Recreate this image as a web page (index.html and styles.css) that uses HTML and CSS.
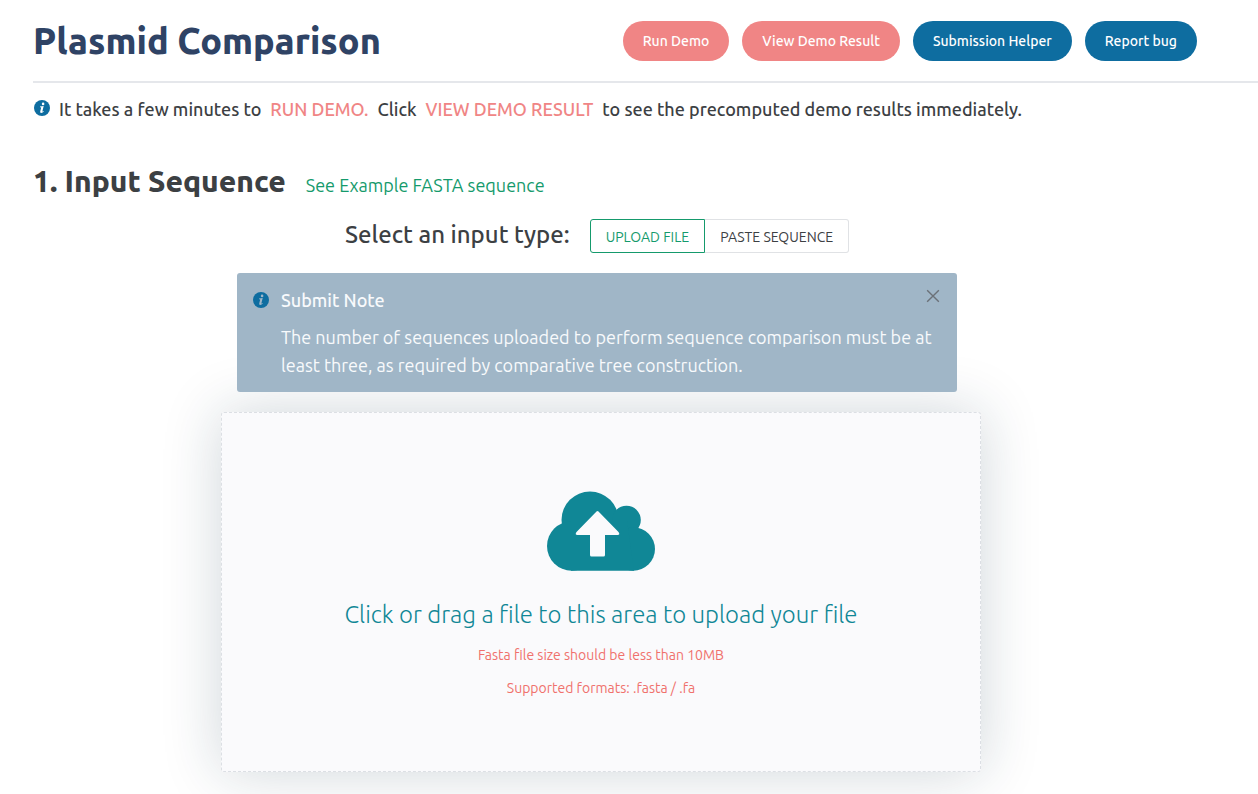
FILE: index.html
```html
<!DOCTYPE html>
<html lang="en">
<head>
<meta charset="utf-8">
<meta name="viewport" content="width=device-width, initial-scale=1">
<title>Plasmid Comparison</title>
<link rel="stylesheet" href="styles.css">
</head>
<body>
<svg class="symbols" aria-hidden="true">
  <symbol id="info" viewBox="0 0 16 16">
    <circle cx="8" cy="8" r="8" fill="#0e6da0"/>
    <circle cx="9.100" cy="3.900" r="1.300" fill="currentColor"/>
    <path d="M6 6.400 9.700 6 8.400 11.200Q8.300 11.900 9.600 10.900L9.900 11.400Q5.900 14.500 6.200 11.500L7.200 7.500Q7.300 7 6 7.200Z" fill="currentColor"/>
  </symbol>
</svg>
<main class="page">
  <header class="page-header">
    <h1 class="title">Plasmid Comparison</h1>
    <div class="actions">
      <button type="button" class="pill pill-demo">Run Demo</button>
      <button type="button" class="pill pill-demo">View Demo Result</button>
      <button type="button" class="pill">Submission Helper</button>
      <button type="button" class="pill">Report bug</button>
    </div>
  </header>
  <div class="hint">
    <svg class="info-icon"><use href="#info"/></svg>
    <p class="hint-text"><span>It takes a few minutes to</span><span class="accent">RUN DEMO.</span><span>Click</span><span class="accent">VIEW DEMO RESULT</span><span>to see the precomputed demo results immediately.</span></p>
  </div>
  <section class="input-section">
    <div class="section-heading">
      <h2 class="section-title">1. Input Sequence</h2>
      <a class="example-link" href="#example">See Example FASTA sequence</a>
    </div>
    <div class="type-row">
      <h3 class="type-label" id="type-label">Select an input type:</h3>
      <div class="segmented" role="group" aria-labelledby="type-label">
        <button type="button" class="segment segment-active" aria-pressed="true">UPLOAD FILE</button>
        <button type="button" class="segment" aria-pressed="false">PASTE SEQUENCE</button>
      </div>
    </div>
    <div class="note" role="note">
      <svg class="info-icon"><use href="#info"/></svg>
      <div class="note-body">
        <h4 class="note-title">Submit Note</h4>
        <p class="note-text">The number of sequences uploaded to perform sequence comparison must be at least three, as required by comparative tree construction.</p>
      </div>
      <button type="button" class="close" aria-label="Close">
        <svg class="close-icon" viewBox="0 0 12 12"><path d="M1 1 11 11M11 1 1 11" fill="none" stroke="currentColor" stroke-width="1.2"/></svg>
      </button>
    </div>
    <div class="drop-row">
      <button type="button" class="dropzone" id="example">
        <svg class="cloud" viewBox="0 0 108 80" aria-hidden="true">
          <g fill="#108796">
            <circle cx="43" cy="29" r="28.500"/>
            <circle cx="79.500" cy="29" r="14.300"/>
            <circle cx="24.700" cy="55" r="24.700"/>
            <circle cx="86.300" cy="58" r="21.700"/>
            <path d="M24 30H80L87 79.700H24Z"/>
          </g>
          <path fill="#fafafc" d="M49.500 20.500Q50.500 19.500 51.500 20.500L71.500 41Q73.500 44 70.500 44H58V64Q58 65.500 56.500 65.500H44.500Q43 65.500 43 64V44H30.500Q27.500 44 29.500 41Z"/>
        </svg>
        <span class="drop-title">Click or drag a file to this area to upload your file</span>
        <span class="drop-hint">Fasta file size should be less than 10MB</span>
        <span class="drop-hint">Supported formats: .fasta / .fa</span>
      </button>
    </div>
  </section>
</main>
</body>
</html>
```
FILE: styles.css
```css
* {
  box-sizing: border-box;
}

body {
  margin: 0;
  background: #fff;
  color: #3c4043;
  font-family: Ubuntu, "Noto Sans", "Open Sans", sans-serif;
  font-size: 18px;
  line-height: 28px;
}

h1, h2, h3, h4, p {
  margin: 0;
}

button {
  font-family: inherit;
  cursor: pointer;
}

.symbols {
  display: none;
}

.page {
  padding-left: 33px;
}

.page-header {
  display: flex;
  align-items: center;
  justify-content: space-between;
  padding: 16px 61px 15px 0;
  border-bottom: 2px solid #e5e7eb;
  line-height: 50px;
}

.title {
  color: #2f4365;
  font-size: 36px;
  font-weight: 800;
}

.actions {
  display: flex;
  gap: 13px;
}

.pill {
  height: 40px;
  padding: 0 20px;
  border: 0;
  border-radius: 20px;
  background: #0e6da0;
  color: #fff;
  font-size: 14px;
  font-weight: 500;
  white-space: nowrap;
}

.pill-demo {
  background: #f08585;
}

.info-icon {
  flex: none;
  width: 16px;
  height: 16px;
  color: #fff;
}

.hint {
  display: flex;
  align-items: flex-start;
  gap: 9px;
  padding: 12px 0 0 1px;
}

.hint .info-icon {
  margin-top: 5px;
}

.hint-text {
  display: flex;
  flex-wrap: wrap;
  gap: 0 9px;
  font-weight: 500;
}

.accent {
  color: #f08585;
}

.input-section {
  margin: 38px 97px 0 0;
}

.section-heading {
  display: flex;
  align-items: baseline;
  gap: 20px;
  line-height: 40px;
}

.section-title {
  font-size: 30px;
  font-weight: 800;
}

.example-link {
  color: #159a6c;
  text-decoration: none;
}

.type-row {
  display: flex;
  justify-content: center;
  align-items: center;
  gap: 20px;
  padding: 14px 0 20px;
}

.type-label {
  padding-bottom: 2px;
  font-size: 24px;
  font-weight: 500;
}

.segmented {
  display: flex;
}

.segment {
  height: 34px;
  padding: 2px 15px 0;
  border: 1px solid #e0e2e5;
  border-left: 0;
  border-radius: 0 3px 3px 0;
  background: #fff;
  color: #3c4043;
  font-size: 14px;
}

.segment-active {
  border: 1px solid #159a6c;
  border-radius: 3px 0 0 3px;
  color: #159a6c;
}

.note {
  position: relative;
  z-index: 1;
  display: flex;
  align-items: flex-start;
  max-width: 720px;
  margin: 0 auto;
  padding: 13px 16px;
  border-radius: 3px;
  background: #a0b6c7;
  color: #f8fafc;
}

.note .info-icon {
  margin: 6px 12px 0 0;
  color: #a0b6c7;
}

.note-title {
  margin-bottom: 9px;
  font-size: 18px;
  font-weight: 500;
}

.close {
  position: absolute;
  top: 16px;
  right: 17px;
  display: flex;
  padding: 0;
  border: 0;
  background: none;
  color: #6b7178;
}

.close-icon {
  width: 14px;
  height: 14px;
}

.drop-row {
  display: flex;
  justify-content: center;
  padding: 20px 0 22px 8px;
}

.dropzone {
  display: flex;
  flex-direction: column;
  align-items: center;
  width: 100%;
  max-width: 760px;
  padding: 78px 16px 75px;
  border: 1px dashed #dcdfe4;
  border-radius: 3px;
  background: #fafafc;
  box-shadow: 0 0 60px rgba(20, 50, 70, 0.2);
}

.cloud {
  width: 108px;
  height: 80px;
}

.drop-title {
  margin: 24px 0 12px;
  color: #108796;
  font-size: 24px;
  font-weight: 300;
  line-height: 40px;
}

.drop-hint {
  color: #f0716c;
  font-size: 14px;
  line-height: 16px;
}

.drop-hint + .drop-hint {
  margin-top: 17px;
}
```
